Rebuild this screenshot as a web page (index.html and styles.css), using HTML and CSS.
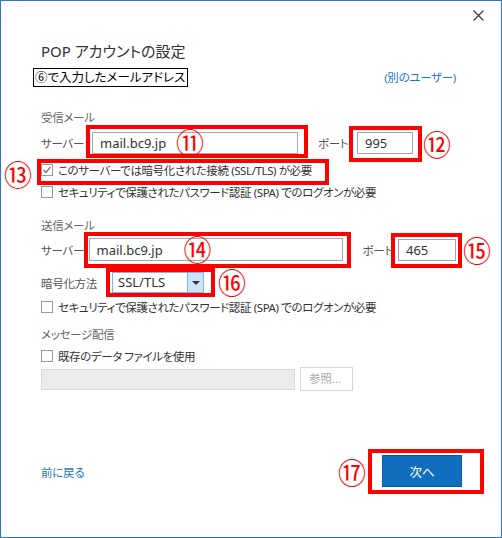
FILE: index.html
```html
<!DOCTYPE html>
<html lang="ja">

<head>
    <meta charset="UTF-8">
    <meta name="viewport" content="width=device-width, initial-scale=1.0">
    <title>POP アカウントの設定</title>
    <link rel="stylesheet" href="styles.css">
</head>

<body>
    <div class="dialog">
        <div class="titlebar">
            <span class="close">
                <svg width="11" height="11" viewBox="0 0 11 11">
                    <path d="M0.5 0.5 L10.5 10.5 M10.5 0.5 L0.5 10.5" stroke="#333" stroke-width="1.1" fill="none" />
                </svg>
            </span>
        </div>

        <div class="content">
            <h1 class="title">POP アカウントの設定</h1>

            <div class="account-row">
                <span class="account-box">⑥で入力したメールアドレス</span>
                <a class="link">(別のユーザー)</a>
            </div>

            <!-- incoming -->
            <div class="group-label in-label">受信メール</div>
            <div class="field-row row-in">
                <span class="field-label">サーバー</span>
                <span class="mark mark-server1">
                    <span class="textbox server1">mail.bc9.jp</span>
                    <span class="num num-11">⑪</span>
                </span>
                <span class="port-label">ポート</span>
                <span class="mark mark-port1">
                    <span class="textbox port1">995</span>
                    <span class="num num-12">⑫</span>
                </span>
            </div>

            <div class="mark mark-ssl">
                <label class="check">
                    <span class="box checked">
                        <svg width="10" height="10" viewBox="0 0 10 10">
                            <path d="M1.5 5 L4 7.5 L8.5 2" stroke="#777" stroke-width="1.2" fill="none" />
                        </svg>
                    </span>
                    このサーバーでは暗号化された接続 (SSL/TLS) が必要
                </label>
                <span class="num num-13">⑬</span>
            </div>
            <label class="check spa-in">
                <span class="box"></span>
                セキュリティで保護されたパスワード認証 (SPA) でのログオンが必要
            </label>

            <!-- outgoing -->
            <div class="group-label out-label">送信メール</div>
            <div class="field-row row-out">
                <span class="field-label">サーバー</span>
                <span class="mark mark-server2">
                    <span class="textbox server2">mail.bc9.jp</span>
                    <span class="num num-14">⑭</span>
                </span>
                <span class="port-label">ポート</span>
                <span class="mark mark-port2">
                    <span class="textbox port2">465</span>
                    <span class="num num-15">⑮</span>
                </span>
            </div>

            <div class="field-row row-enc">
                <span class="field-label enc-label">暗号化方法</span>
                <span class="mark mark-select">
                    <span class="select">
                        <span class="select-value">SSL/TLS</span>
                        <span class="select-btn"><span class="arrow"></span></span>
                    </span>
                    <span class="num num-16">⑯</span>
                </span>
            </div>
            <label class="check spa-out">
                <span class="box"></span>
                セキュリティで保護されたパスワード認証 (SPA) でのログオンが必要
            </label>

            <!-- delivery -->
            <div class="group-label deliver-label">メッセージ配信</div>
            <label class="check existing">
                <span class="box"></span>
                既存のデータ ファイルを使用
            </label>
            <div class="file-row">
                <span class="file-input"></span>
                <span class="browse">参照...</span>
            </div>
        </div>

        <div class="footer">
            <a class="link back">前に戻る</a>
            <div class="next-group">
                <span class="num-inline">⑰</span>
                <span class="mark-next">
                    <span class="next-btn">次へ</span>
                </span>
            </div>
        </div>
    </div>
</body>

</html>
```

FILE: styles.css
```css
* {
    margin: 0;
    padding: 0;
    box-sizing: border-box;
}

body {
    font-family: "Noto Sans", "Noto Sans CJK JP", sans-serif;
    font-feature-settings: "palt";
    background: #fff;
    color: #333;
}

.dialog {
    width: 502px;
    height: 538px;
    border: 1px solid #2b79c4;
    display: flex;
    flex-direction: column;
}

.titlebar {
    height: 30px;
    display: flex;
    justify-content: flex-end;
    padding: 9px 17px 0 0;
}

.close {
    display: block;
    width: 11px;
    height: 11px;
}

.close svg {
    display: block;
}

.content {
    display: flex;
    flex-direction: column;
    padding: 0 45px 0 40px;
}

.title {
    margin-top: 10px;
    font-size: 15px;
    font-weight: normal;
    line-height: 20px;
    color: #333;
}

.account-row {
    margin-top: 7px;
    height: 18px;
    display: flex;
    justify-content: space-between;
    align-items: center;
}

.account-box {
    margin-left: -8px;
    height: 19px;
    padding: 0 2px 0 1px;
    border: 1px solid #000;
    font-size: 12.5px;
    line-height: 17px;
    color: #000;
}

.link {
    color: #1f74c8;
    font-size: 11.5px;
    letter-spacing: -0.3px;
    cursor: pointer;
}

.group-label {
    font-size: 11.5px;
    letter-spacing: -0.3px;
    line-height: 16px;
    color: #666;
}

.in-label {
    margin-top: 24px;
}

.out-label {
    margin-top: 18px;
}

.deliver-label {
    margin-top: 12px;
}

.field-row {
    display: flex;
    align-items: center;
    font-size: 11.5px;
    letter-spacing: -0.3px;
}

.row-in {
    margin-top: 6px;
    height: 22px;
}

.row-out {
    margin-top: 4px;
    height: 23px;
}

.row-enc {
    margin-top: 11px;
    height: 21px;
}

.field-label {
    width: 51px;
    color: #555;
}

.enc-label {
    width: 71px;
}

.port-label {
    width: 39px;
    margin-left: 20px;
    color: #555;
}

.row-out .port-label {
    width: 38px;
}

.textbox {
    display: flex;
    align-items: center;
    height: 22px;
    padding-left: 7px;
    border: 1px solid #a6a6a6;
    background: #fff;
    font-size: 13px;
    letter-spacing: 0;
    color: #333;
}

.server1 {
    width: 206px;
}

.port1 {
    width: 56px;
}

.server2 {
    width: 254px;
    height: 23px;
}

.port2 {
    width: 58px;
}

/* red annotation frames */
.mark {
    position: relative;
    display: flex;
    border: 4px solid #f00;
}

.mark-server1 {
    padding: 3px 6px 0 2px;
    margin: -7px -10px -4px -6px;
}

.mark-port1 {
    padding: 2px 5px 4px 4px;
    margin: -6px -9px -8px -8px;
}

.mark-ssl {
    align-self: flex-start;
    margin: 5px 0 -1px -4px;
    padding: 0 13px 4px 0;
}

.mark-ssl .check {
    height: 14px;
}

.mark-server2 {
    padding: 2px 4px 3px 1px;
    margin: -6px -8px -7px -5px;
}

.mark-port2 {
    padding: 2px 2px 3px 3px;
    margin: -6px -6px -7px -7px;
}

.mark-select {
    padding: 0 7px 0 2px;
    margin: -4px -11px -4px -6px;
}

.num,
.num-inline {
    font-family: "Noto Sans CJK JP", sans-serif;
    font-size: 28px;
    line-height: 28px;
    letter-spacing: 0;
    color: #f00;
    font-feature-settings: normal;
}

.num {
    position: absolute;
}

.num-11 {
    left: 86px;
    top: -1px;
}

.num-12 {
    left: 70px;
    top: 0;
}

.num-13 {
    left: -37px;
    top: -3px;
}

.num-14 {
    left: 96px;
    top: -1px;
}

.num-15 {
    left: 68px;
    top: -1px;
}

.num-16 {
    left: 108px;
    top: -4px;
}

/* checkboxes */
.check {
    display: flex;
    align-items: center;
    gap: 5px;
    height: 16px;
    font-size: 11.5px;
    letter-spacing: -0.4px;
    color: #333;
}

.box {
    width: 12px;
    height: 12px;
    border: 1px solid #999;
    background: #fff;
    display: flex;
    align-items: center;
    justify-content: center;
}

.box svg {
    display: block;
}

.spa-out {
    margin-top: 6px;
}

.existing {
    margin-top: 5px;
}

/* select */
.select {
    display: flex;
    width: 92px;
    height: 21px;
    border: 1px solid #7eb4ea;
    background: #fff;
}

.select-value {
    flex: 1;
    padding-left: 5px;
    font-size: 13px;
    letter-spacing: 0;
    line-height: 19px;
    color: #333;
}

.select-btn {
    width: 16px;
    background: #cce4f7;
    border-left: 1px solid #7eb4ea;
    display: flex;
    align-items: center;
    justify-content: center;
}

.arrow {
    width: 0;
    height: 0;
    border-left: 4px solid transparent;
    border-right: 4px solid transparent;
    border-top: 4px solid #333;
}

/* file row */
.file-row {
    margin-top: 3px;
    display: flex;
    align-items: center;
    gap: 5px;
}

.file-input {
    width: 254px;
    height: 21px;
    background: #ececec;
    border: 1px solid #dadada;
}

.browse {
    width: 53px;
    height: 24px;
    border: 1px solid #d6d6d6;
    background: #fff;
    font-size: 11.5px;
    line-height: 22px;
    color: #aaa;
    padding-left: 8px;
}

/* footer */
.footer {
    margin-top: auto;
    padding: 0 17px 43px 40px;
    display: flex;
    justify-content: space-between;
    align-items: center;
}

.back {
    font-size: 11.5px;
}

.next-group {
    display: flex;
    align-items: center;
    gap: 2px;
}

.mark-next {
    border: 4px solid #f00;
    padding: 2px 18px 3px 10px;
}

.next-btn {
    display: flex;
    align-items: center;
    justify-content: center;
    width: 80px;
    height: 32px;
    background: #106ebe;
    border: 1px solid #0a5a9e;
    color: #fff;
    font-size: 12.5px;
}
```
